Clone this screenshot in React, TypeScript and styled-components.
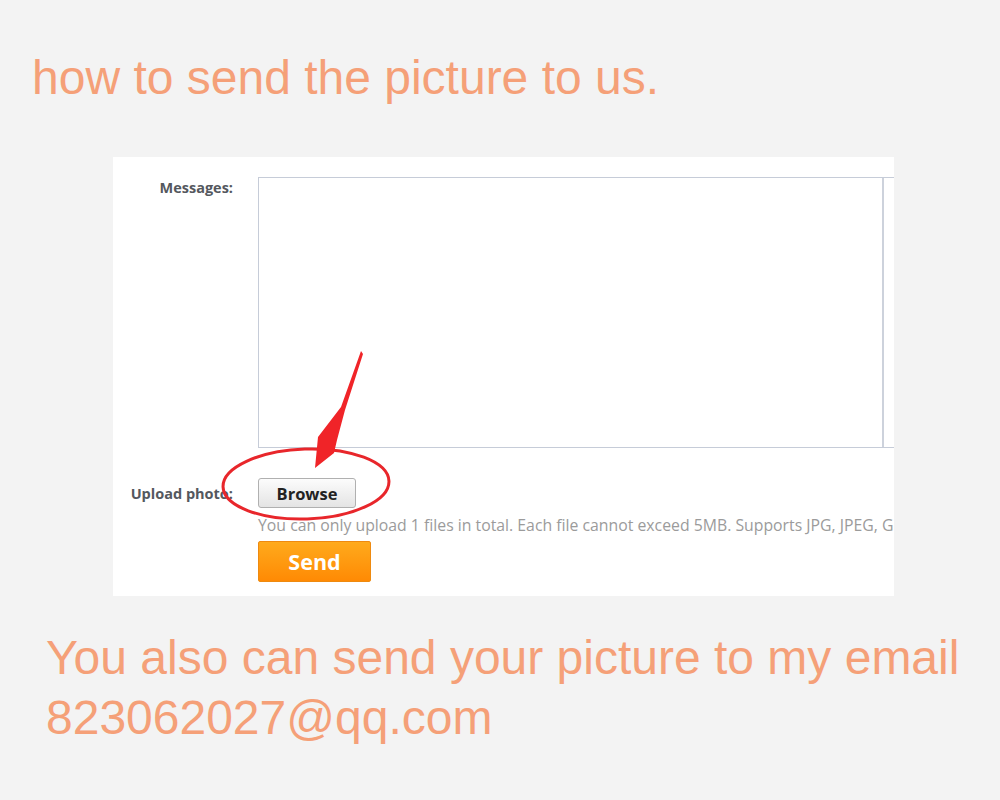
import styled, { createGlobalStyle } from "styled-components";

const GlobalStyle = createGlobalStyle`
  html, body {
    margin: 0;
    padding: 0;
    background: #f3f3f3;
  }
`;

const Page = styled.div`
  width: 1000px;
  height: 800px;
  display: flex;
  flex-direction: column;
  background: #f3f3f3;
  font-family: "Liberation Sans", Arial, sans-serif;
  overflow: hidden;
`;

const Heading = styled.h1`
  margin: 54px 0 0 32px;
  font-size: 48px;
  line-height: 48px;
  font-weight: normal;
  color: #f5a078;
`;

const Card = styled.div`
  position: relative;
  margin: 55px 0 0 113px;
  width: 781px;
  height: 439px;
  box-sizing: border-box;
  padding-top: 20px;
  background: #ffffff;
  overflow: hidden;
  display: flex;
  flex-direction: column;
  font-family: "Open Sans", "Noto Sans", sans-serif;
`;

const FieldRow = styled.div<{ $center?: boolean; $gap?: number }>`
  display: flex;
  align-items: ${(p) => (p.$center ? "center" : "flex-start")};
  gap: 25px;
  margin-top: ${(p) => p.$gap ?? 0}px;
`;

const Label = styled.label<{ $offset?: number }>`
  width: 120px;
  flex-shrink: 0;
  text-align: right;
  font-size: 14.5px;
  font-weight: 700;
  color: #54585e;
  padding-top: ${(p) => p.$offset ?? 0}px;
`;

const MessageBox = styled.div`
  width: 680px;
  height: 271px;
  flex-shrink: 0;
  box-sizing: border-box;
  border: 1px solid #c6ccd8;
  display: flex;
`;

const MessageArea = styled.div`
  width: 623px;
  height: 100%;
`;

const ScrollTrack = styled.div`
  flex: 1;
  border-left: 2px solid #cdd2dc;
`;

const BrowseButton = styled.button`
  width: 98px;
  height: 30px;
  box-sizing: border-box;
  border: 1px solid #b0b0b0;
  border-radius: 3px;
  background: linear-gradient(#fcfcfc, #e4e4e4);
  font-family: "Open Sans", "Noto Sans", sans-serif;
  font-size: 16.5px;
  font-weight: 700;
  color: #222;
  padding: 0;
`;

// the note runs past the card edge and is clipped there
const Hint = styled.div`
  margin: 7px 0 0 145px;
  font-size: 15.8px;
  line-height: 20px;
  color: #9b9b9b;
  white-space: nowrap;
`;

const SendButton = styled.button`
  margin: 6px 0 0 145px;
  width: 113px;
  height: 41px;
  box-sizing: border-box;
  border: 1px solid #ee8a10;
  border-radius: 2px;
  background: linear-gradient(#ffaa1c, #ff8a04);
  font-family: "Open Sans", "Noto Sans", sans-serif;
  font-size: 21.5px;
  font-weight: 700;
  color: #ffffff;
  padding: 0;
`;

const Markup = styled.svg`
  position: absolute;
  left: 0;
  top: 0;
  pointer-events: none;
`;

const Footer = styled.p`
  margin: 32px 0 0 46px;
  font-size: 48px;
  line-height: 60px;
  color: #f5a078;
`;

function App() {
  return (
    <Page>
      <GlobalStyle />
      <Heading>how to send the picture to us.</Heading>
      <Card>
        <FieldRow>
          <Label $offset={1}>Messages:</Label>
          <MessageBox>
            <MessageArea />
            <ScrollTrack />
          </MessageBox>
        </FieldRow>
        <FieldRow $center $gap={30}>
          <Label>Upload photo:</Label>
          <BrowseButton>Browse</BrowseButton>
        </FieldRow>
        <Hint>
          You can only upload 1 files in total. Each file cannot exceed 5MB. Supports JPG, JPEG, GIF, PNG
        </Hint>
        <SendButton>Send</SendButton>

        {/* red circle and arrow pointing at the browse button */}
        <Markup width="781" height="439" viewBox="0 0 781 439">
          <ellipse
            cx="193"
            cy="327"
            rx="83"
            ry="35"
            fill="none"
            stroke="#e8262b"
            strokeWidth="3"
            transform="rotate(-2 193 327)"
          />
          <polygon
            points="248,194 250,197 232,253 224,283 221,296 202,311 205,280 228,250"
            fill="#f02428"
          />
        </Markup>
      </Card>
      <Footer>
        You also can send your picture to my email
        <br />
        823062027@qq.com
      </Footer>
    </Page>
  );
}

export default App;
